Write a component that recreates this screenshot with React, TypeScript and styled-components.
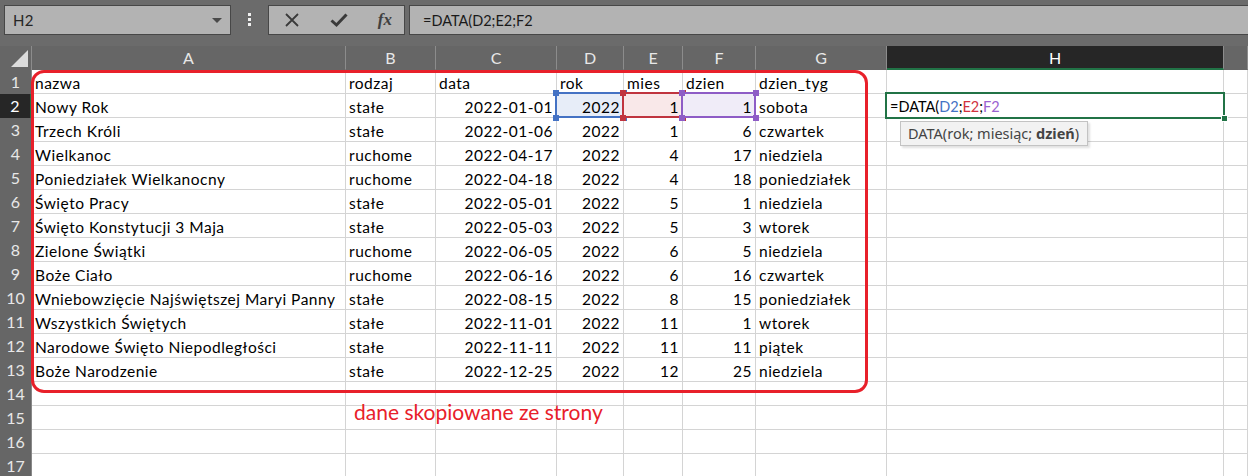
import React from 'react';
import styled, { createGlobalStyle } from 'styled-components';

const GlobalStyle = createGlobalStyle`
    html, body {
        margin: 0;
        padding: 0;
        background: #6b6b6b;
        overflow: hidden;
    }
`;

const GRID = '32px 314px 90px 121px 67px 59px 73px 131px 337px 1fr';
const COLUMNS = ['A', 'B', 'C', 'D', 'E', 'F', 'G', 'H', ''];
const ALIGN: ('left' | 'right')[] = ['left', 'left', 'right', 'right', 'right', 'right', 'left', 'left', 'left'];

const RANGE = {
    blue: { line: '#4472c4', fill: '#e7edf8' },
    red: { line: '#c0343f', fill: '#f9e8e9' },
    purple: { line: '#8e5cc6', fill: '#f0ecf8' },
};
type Tone = keyof typeof RANGE;

const HEADER = ['nazwa', 'rodzaj', 'data', 'rok', 'mies', 'dzien', 'dzien_tyg'];

const DATA: (string | number)[][] = [
    ['Nowy Rok', 'stałe', '2022-01-01', 2022, 1, 1, 'sobota'],
    ['Trzech Króli', 'stałe', '2022-01-06', 2022, 1, 6, 'czwartek'],
    ['Wielkanoc', 'ruchome', '2022-04-17', 2022, 4, 17, 'niedziela'],
    ['Poniedziałek Wielkanocny', 'ruchome', '2022-04-18', 2022, 4, 18, 'poniedziałek'],
    ['Święto Pracy', 'stałe', '2022-05-01', 2022, 5, 1, 'niedziela'],
    ['Święto Konstytucji 3 Maja', 'stałe', '2022-05-03', 2022, 5, 3, 'wtorek'],
    ['Zielone Świątki', 'ruchome', '2022-06-05', 2022, 6, 5, 'niedziela'],
    ['Boże Ciało', 'ruchome', '2022-06-16', 2022, 6, 16, 'czwartek'],
    ['Wniebowzięcie Najświętszej Maryi Panny', 'stałe', '2022-08-15', 2022, 8, 15, 'poniedziałek'],
    ['Wszystkich Świętych', 'stałe', '2022-11-01', 2022, 11, 1, 'wtorek'],
    ['Narodowe Święto Niepodległości', 'stałe', '2022-11-11', 2022, 11, 11, 'piątek'],
    ['Boże Narodzenie', 'stałe', '2022-12-25', 2022, 12, 25, 'niedziela'],
];

const Window = styled('div')`
    width: 1248px;
    height: 476px;
    overflow: hidden;
    background: #6b6b6b;
    font-family: Lato, 'Liberation Sans', sans-serif;
`;

const FormulaBar = styled('div')`
    display: flex;
    align-items: flex-start;
    height: 46px;
    box-sizing: border-box;
    padding: 5px 0 0 4px;
`;

const Field = styled('div')`
    display: flex;
    align-items: center;
    box-sizing: border-box;
    height: 30px;
    background: #b3b3b3;
    border: 1px solid #474747;
    color: #262626;
    font-size: 15px;
`;

const NameBox = styled(Field)`
    width: 227px;
    justify-content: space-between;
    padding: 0 8px 0 8px;
    letter-spacing: 0.3px;
`;

const Caret = styled('span')`
    width: 0;
    height: 0;
    border-left: 5px solid transparent;
    border-right: 5px solid transparent;
    border-top: 5px solid #4a4a4a;
`;

const Grip = styled('div')`
    display: flex;
    flex-direction: column;
    align-items: center;
    gap: 2px;
    width: 37px;
    padding-top: 8px;
`;

const GripDot = styled('span')`
    width: 3px;
    height: 3px;
    background: #f0f0f0;
`;

const Buttons = styled(Field)`
    width: 137px;
    justify-content: space-between;
    padding: 0 12px 0 15px;
`;

const FxLabel = styled('span')`
    font-family: 'Liberation Serif', serif;
    font-style: italic;
    font-weight: bold;
    font-size: 17px;
    color: #404040;
`;

const FormulaInput = styled(Field)`
    flex: 1;
    margin-left: 4px;
    padding-left: 13px;
    border-right: none;
    font-size: 14.5px;
    color: #1a1a1a;
`;

const Sheet = styled('div')`
    position: relative;
    background: #fff;
`;

const Row = styled('div')`
    display: grid;
    grid-template-columns: ${GRID};
    height: 24px;
`;

const Corner = styled('div')`
    display: flex;
    align-items: flex-end;
    justify-content: flex-end;
    box-sizing: border-box;
    padding: 0 3px 3px 0;
    background: #666;
    border-right: 1px solid #8c8c8c;
`;

const CornerMark = styled('span')`
    width: 0;
    height: 0;
    border-left: 17px solid transparent;
    border-bottom: 17px solid #dcdcdc;
`;

const ColumnHead = styled('div')<{ $active?: boolean }>`
    box-sizing: border-box;
    height: 24px;
    line-height: 23px;
    text-align: center;
    font-size: 16px;
    color: ${({ $active }) => ($active ? '#ffffff' : '#e8e8e8')};
    background: ${({ $active }) => ($active ? '#262626' : '#666')};
    border-right: 1px solid #8c8c8c;
    border-bottom: ${({ $active }) => ($active ? '2px solid #217346' : '1px solid #666')};
`;

const RowHead = styled('div')<{ $active?: boolean }>`
    box-sizing: border-box;
    line-height: 24px;
    text-align: center;
    font-size: 16px;
    color: ${({ $active }) => ($active ? '#ffffff' : '#e8e8e8')};
    background: ${({ $active }) => ($active ? '#262626' : '#666')};
    border-bottom: 1px solid #888;
    border-right: ${({ $active }) => ($active ? '2px solid #217346' : '1px solid #888')};
`;

const Cell = styled('div')<{ $align?: 'left' | 'right'; $fill?: string; $raised?: boolean }>`
    ${({ $raised }) => ($raised ? 'position: relative; z-index: 2;' : '')}
    box-sizing: border-box;
    height: 24px;
    padding: 0 3px 0 3px;
    line-height: 26px;
    font-size: 15.5px;
    letter-spacing: 0.5px;
    color: #000;
    white-space: nowrap;
    text-align: ${({ $align }) => $align || 'left'};
    background: ${({ $fill }) => $fill || '#fff'};
    border-right: 1px solid #d4d4d4;
    border-bottom: 1px solid #d4d4d4;
`;

const EditCell = styled(Cell)`
    font-size: 14.5px;
    letter-spacing: 0;
`;

const RefBox = styled('span')<{ $color: string }>`
    position: absolute;
    top: -2px;
    left: -2px;
    right: -1px;
    bottom: -1px;
    border: 2px solid ${({ $color }) => $color};
    pointer-events: none;
`;

const Handle = styled('span')<{ $color: string; $x: 'l' | 'r'; $y: 't' | 'b' }>`
    position: absolute;
    width: 6px;
    height: 6px;
    background: ${({ $color }) => $color};
    ${({ $x }) => ($x === 'l' ? 'left: -4px;' : 'right: -4px;')}
    ${({ $y }) => ($y === 't' ? 'top: -4px;' : 'bottom: -4px;')}
`;

const ActiveBox = styled('span')`
    position: absolute;
    top: -2px;
    left: -2px;
    right: -2px;
    bottom: -2px;
    border: 2px solid #217346;
`;

const FillHandle = styled('span')`
    position: absolute;
    right: -5px;
    bottom: -5px;
    width: 5px;
    height: 5px;
    background: #217346;
    border: 1px solid #fff;
`;

const Ref = styled('span')<{ $color: string }>`
    color: ${({ $color }) => $color};
`;

const Tip = styled('div')`
    position: absolute;
    top: 27px;
    left: 13px;
    height: 25px;
    box-sizing: border-box;
    padding: 0 8px 0 7px;
    line-height: 23px;
    font-family: 'Noto Sans', 'Open Sans', sans-serif;
    font-size: 14.5px;
    letter-spacing: 0;
    color: #444;
    background: #f2f2f2;
    border: 1px solid #c3c3c3;
    box-shadow: 2px 2px 2px rgba(0, 0, 0, 0.12);
`;

const Frame = styled('div')`
    position: absolute;
    top: 24px;
    left: 31px;
    width: 837px;
    height: 323px;
    box-sizing: border-box;
    border: 3px solid #e8202a;
    border-radius: 13px;
    pointer-events: none;
`;

const Note = styled('div')`
    position: absolute;
    top: 353px;
    left: 354px;
    font-family: Lato, 'Liberation Sans', sans-serif;
    font-size: 21px;
    color: #e8202a;
`;

const RefCell = ({ tone, children }: { tone: Tone; children: React.ReactNode }) => (
    <Cell $align="right" $fill={RANGE[tone].fill} $raised>
        {children}
        <RefBox $color={RANGE[tone].line} />
        <Handle $color={RANGE[tone].line} $x="l" $y="t" />
        <Handle $color={RANGE[tone].line} $x="r" $y="t" />
        <Handle $color={RANGE[tone].line} $x="l" $y="b" />
        <Handle $color={RANGE[tone].line} $x="r" $y="b" />
    </Cell>
);

const XIcon = () => (
    <svg width="16" height="16" viewBox="0 0 16 16">
        <path d="M2 2 L14 14 M14 2 L2 14" stroke="#3a3a3a" strokeWidth="1.8" fill="none" />
    </svg>
);

const CheckIcon = () => (
    <svg width="18" height="16" viewBox="0 0 18 16">
        <path d="M1.5 8.5 L6.5 13 L16.5 2.5" stroke="#3a3a3a" strokeWidth="3" fill="none" />
    </svg>
);

export default function App() {
    const body: (string | number)[][] = [HEADER, ...DATA, [], [], [], []];

    return (
        <Window>
            <GlobalStyle />
            <FormulaBar>
                <NameBox>
                    <span>H2</span>
                    <Caret />
                </NameBox>
                <Grip>
                    <GripDot />
                    <GripDot />
                    <GripDot />
                </Grip>
                <Buttons>
                    <XIcon />
                    <CheckIcon />
                    <FxLabel>fx</FxLabel>
                </Buttons>
                <FormulaInput>=DATA(D2;E2;F2</FormulaInput>
            </FormulaBar>
            <Sheet>
                <Row>
                    <Corner>
                        <CornerMark />
                    </Corner>
                    {COLUMNS.map((c, i) => (
                        <ColumnHead key={i} $active={c === 'H'}>
                            {c}
                        </ColumnHead>
                    ))}
                </Row>
                {body.map((values, r) => (
                    <Row key={r}>
                        <RowHead $active={r === 1}>{r + 1}</RowHead>
                        {COLUMNS.map((c, i) => {
                            if (r === 1 && c === 'D') return <RefCell key={i} tone="blue">{values[i]}</RefCell>;
                            if (r === 1 && c === 'E') return <RefCell key={i} tone="red">{values[i]}</RefCell>;
                            if (r === 1 && c === 'F') return <RefCell key={i} tone="purple">{values[i]}</RefCell>;
                            if (r === 1 && c === 'H') {
                                return (
                                    <EditCell key={i} $raised>
                                        =DATA(<Ref $color="#4472c4">D2</Ref>;<Ref $color="#d0323f">E2</Ref>;<Ref $color="#9a62d0">F2</Ref>
                                        <ActiveBox />
                                        <FillHandle />
                                        <Tip>
                                            DATA(rok; miesiąc; <b>dzień</b>)
                                        </Tip>
                                    </EditCell>
                                );
                            }
                            return (
                                <Cell key={i} $align={r === 0 ? 'left' : ALIGN[i]}>
                                    {values[i]}
                                </Cell>
                            );
                        })}
                    </Row>
                ))}
                <Frame />
                <Note>dane skopiowane ze strony</Note>
            </Sheet>
        </Window>
    );
}
